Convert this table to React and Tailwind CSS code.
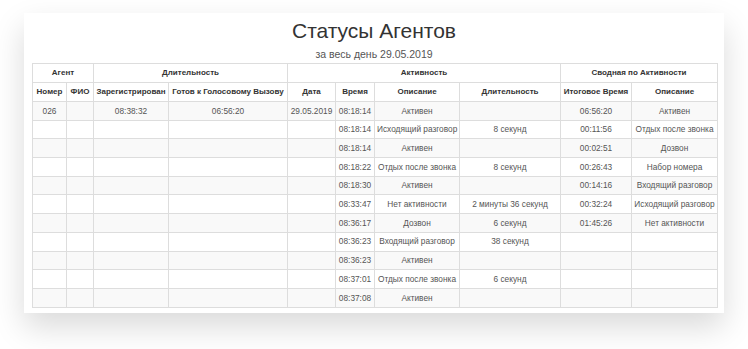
import React from 'react';

const rows = [
  ['026', '', '08:38:32', '06:56:20', '29.05.2019', '08:18:14', 'Активен', '', '06:56:20', 'Активен'],
  ['', '', '', '', '', '08:18:14', 'Исходящий разговор', '8 секунд', '00:11:56', 'Отдых после звонка'],
  ['', '', '', '', '', '08:18:14', 'Активен', '', '00:02:51', 'Дозвон'],
  ['', '', '', '', '', '08:18:22', 'Отдых после звонка', '8 секунд', '00:26:43', 'Набор номера'],
  ['', '', '', '', '', '08:18:30', 'Активен', '', '00:14:16', 'Входящий разговор'],
  ['', '', '', '', '', '08:33:47', 'Нет активности', '2 минуты 36 секунд', '00:32:24', 'Исходящий разговор'],
  ['', '', '', '', '', '08:36:17', 'Дозвон', '6 секунд', '01:45:26', 'Нет активности'],
  ['', '', '', '', '', '08:36:23', 'Входящий разговор', '38 секунд', '', ''],
  ['', '', '', '', '', '08:36:23', 'Активен', '', '', ''],
  ['', '', '', '', '', '08:37:01', 'Отдых после звонка', '6 секунд', '', ''],
  ['', '', '', '', '', '08:37:08', 'Активен', '', '', ''],
];

const widths = [34, 27, 75, 119, 48, 39, 85, 101, 71, 86];

const subHeaders = ['Номер', 'ФИО', 'Зарегистрирован', 'Готов к Голосовому Вызову', 'Дата', 'Время', 'Описание', 'Длительность', 'Итоговое Время', 'Описание'];

const App = () => {
  return (
    <div className="w-[748px] h-[349px] bg-white pt-[13px] pl-[24px]" style={{ fontFamily: '"Liberation Sans", Arial, sans-serif' }}>
      <div className="w-[700px] h-[300px] bg-white shadow-[0_14px_30px_rgba(0,0,0,0.15)] px-[8px] pt-[3px]">
        <h1 className="text-center text-[21px] leading-[30px] text-[#333]">Статусы Агентов</h1>
        <p className="text-center text-[10.5px] leading-[13px] mt-[2px] mb-[2px] text-[#555]">за весь день 29.05.2019</p>

        <table className="table-fixed border-collapse w-[685px] text-[8px] text-center">
          <colgroup>
            {widths.map((w, i) => (
              <col key={i} style={{ width: w }} />
            ))}
          </colgroup>
          <thead className="text-[#333]">
            <tr className="h-[19px]">
              <th colSpan={2} className="border border-[#ddd] font-semibold">Агент</th>
              <th colSpan={2} className="border border-[#ddd] font-semibold">Длительность</th>
              <th colSpan={4} className="border border-[#ddd] font-semibold">Активность</th>
              <th colSpan={2} className="border border-[#ddd] font-semibold">Сводная по Активности</th>
            </tr>
            <tr className="h-[19px]">
              {subHeaders.map((h, i) => (
                <th key={i} className="border border-[#ddd] font-semibold whitespace-nowrap px-[2px]">{h}</th>
              ))}
            </tr>
          </thead>
          <tbody className="text-[#555] text-[8.3px]">
            {rows.map((r, i) => (
              <tr key={i} className={`h-[18.7px] ${i % 2 === 0 ? 'bg-[#f9f9f9]' : 'bg-white'}`}>
                {r.map((c, j) => (
                  <td key={j} className="border border-[#ddd] whitespace-nowrap px-[2px]">{c}</td>
                ))}
              </tr>
            ))}
          </tbody>
        </table>
      </div>
    </div>
  );
};

export default App;
